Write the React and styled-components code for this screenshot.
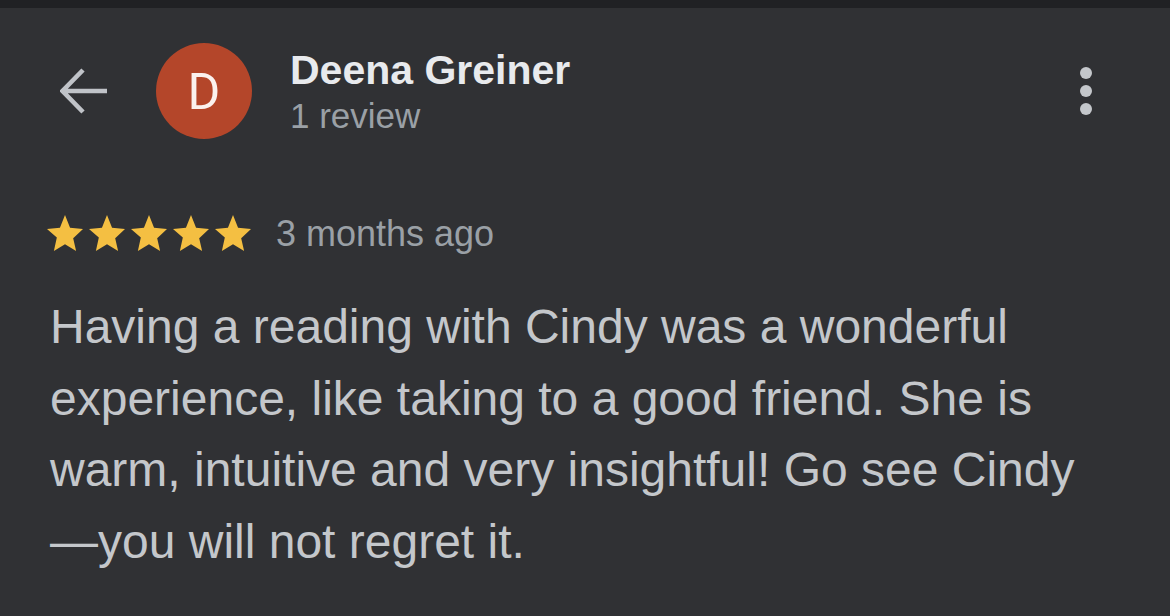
import React from "react";
import styled, { createGlobalStyle } from "styled-components";

const GlobalStyle = createGlobalStyle`
  html, body {
    margin: 0;
    padding: 0;
    background: #303134;
  }
  body {
    font-family: "Liberation Sans", Arial, sans-serif;
  }
`;

const Page = styled.div`
  width: 1170px;
  height: 616px;
  background: #303134;
  display: flex;
  flex-direction: column;
  overflow: hidden;
`;

const TopBand = styled.div`
  height: 8px;
  background: #202124;
`;

const Header = styled.div`
  display: flex;
  align-items: center;
  padding: 35px 78px 0 60px;
`;

const BackButton = styled.div`
  width: 48px;
  height: 48px;
  display: flex;
  color: #c0c3c8;
`;

const Avatar = styled.div`
  width: 96px;
  height: 96px;
  border-radius: 50%;
  background: #b4462a;
  margin-left: 48px;
  display: flex;
  align-items: center;
  justify-content: center;
  color: #fbf1ee;
  font-family: Roboto, "Liberation Sans", sans-serif;
  font-size: 50px;
  line-height: 1;
  padding-top: 2px;
  box-sizing: border-box;
`;

const Who = styled.div`
  display: flex;
  flex-direction: column;
  margin-left: 38px;
`;

const Name = styled.div`
  color: #e8eaed;
  font-weight: 700;
  font-size: 41px;
  line-height: 46px;
`;

const Sub = styled.div`
  color: #9aa0a6;
  font-size: 35px;
  line-height: 40px;
  margin-top: 3px;
`;

const Kebab = styled.div`
  margin-left: auto;
  display: flex;
  flex-direction: column;
  gap: 6px;
  margin-top: -1px;
`;

const Dot = styled.span`
  width: 12px;
  height: 12px;
  border-radius: 50%;
  background: #c4c7cb;
`;

const RatingRow = styled.div`
  display: flex;
  align-items: center;
  padding-left: 47px;
  margin-top: 74px;
  height: 40px;
`;

const Stars = styled.div`
  display: flex;
  gap: 6px;
`;

const When = styled.span`
  color: #9aa0a6;
  font-size: 36px;
  margin-left: 25px;
  margin-top: 1px;
`;

const Body = styled.p`
  margin: 38px 0 0;
  padding-left: 50px;
  color: #c4c7cb;
  font-size: 48px;
  line-height: 71.5px;
  white-space: nowrap;
`;

const Star = () => (
  <svg width="36" height="36" viewBox="2 1 20 20">
    <path
      fill="#f4bf42"
      d="M12 17.27L18.18 21l-1.64-7.03L22 8.75l-7.19-.61L12 1 9.19 8.14 2 8.75l5.46 4.73L5.82 21z"
    />
  </svg>
);

export default function App() {
  return (
    <Page>
      <GlobalStyle />
      <TopBand />
      <Header>
        <BackButton>
          <svg width="48" height="48" viewBox="0 0 48 48" fill="none">
            <path
              d="M47 24H3M23 3L2.5 24 23 45"
              stroke="currentColor"
              strokeWidth="4.6"
            />
          </svg>
        </BackButton>
        <Avatar>D</Avatar>
        <Who>
          <Name>Deena Greiner</Name>
          <Sub>1 review</Sub>
        </Who>
        <Kebab>
          <Dot />
          <Dot />
          <Dot />
        </Kebab>
      </Header>
      <RatingRow>
        <Stars>
          {[0, 1, 2, 3, 4].map((i) => (
            <Star key={i} />
          ))}
        </Stars>
        <When>3 months ago</When>
      </RatingRow>
      <Body>
        Having a reading with Cindy was a wonderful
        <br />
        experience, like taking to a good friend. She is
        <br />
        warm, intuitive and very insightful! Go see Cindy
        <br />
        —you will not regret it.
      </Body>
    </Page>
  );
}
